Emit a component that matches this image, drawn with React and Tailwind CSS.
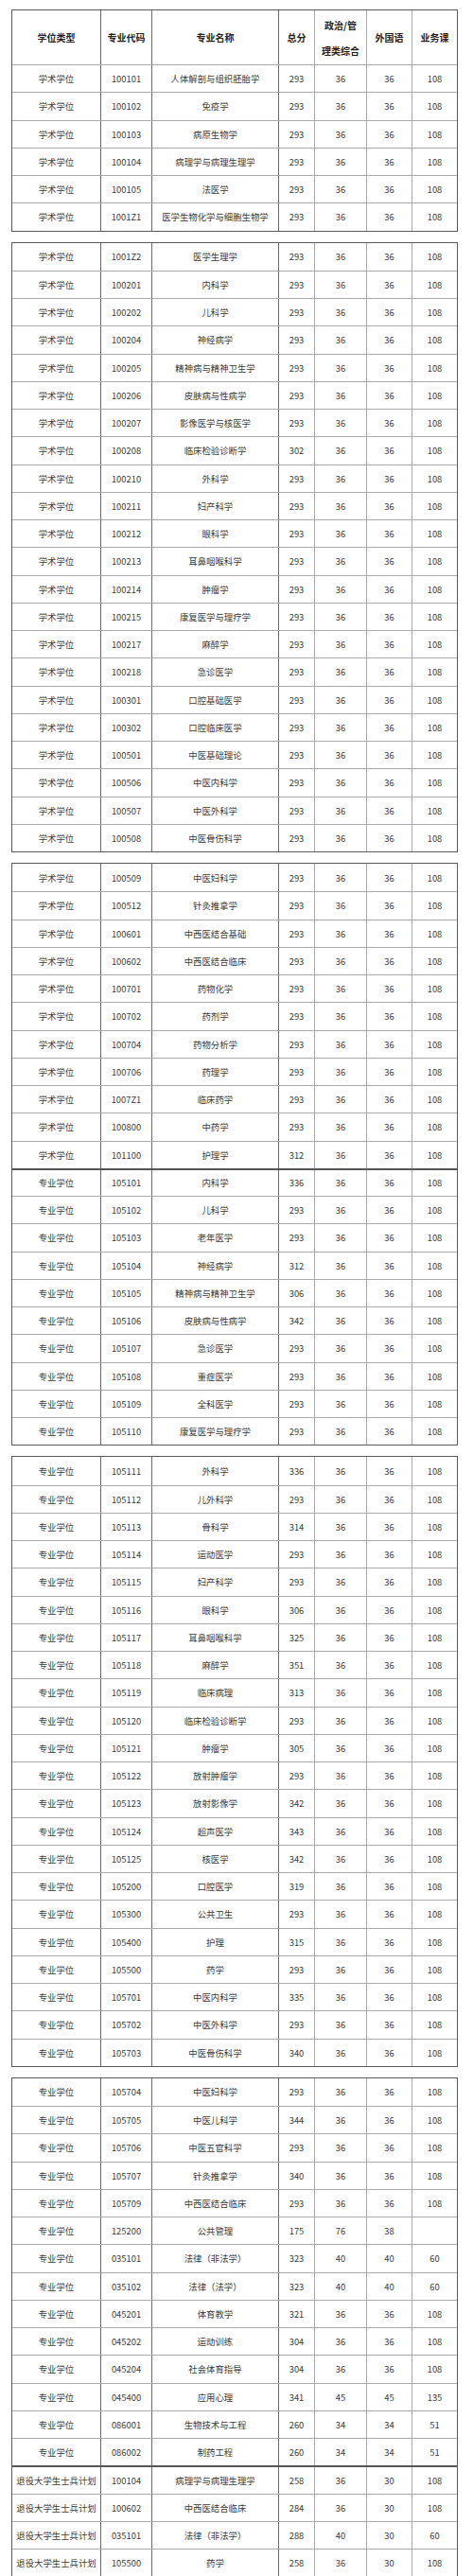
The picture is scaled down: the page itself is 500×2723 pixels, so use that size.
const font = { fontFamily: '"Noto Sans CJK SC", "Noto Sans", sans-serif' };

const XS = "学术学位";
const ZY = "专业学位";
const TY = "退役大学生士兵计划";

// "code|name|total|a|b|c" ; a/b/c default 36/36/108
const row = (type, s, sep) => {
  const [code, name, total, a = "36", b = "36", c = "108"] = s.split("|");
  return { type, code, name, total, a, b, c, sep };
};

const table1 = [
  "100101|人体解剖与组织胚胎学|293",
  "100102|免疫学|293",
  "100103|病原生物学|293",
  "100104|病理学与病理生理学|293",
  "100105|法医学|293",
  "1001Z1|医学生物化学与细胞生物学|293",
].map((s) => row(XS, s));

const table2 = [
  "1001Z2|医学生理学|293",
  "100201|内科学|293",
  "100202|儿科学|293",
  "100204|神经病学|293",
  "100205|精神病与精神卫生学|293",
  "100206|皮肤病与性病学|293",
  "100207|影像医学与核医学|293",
  "100208|临床检验诊断学|302",
  "100210|外科学|293",
  "100211|妇产科学|293",
  "100212|眼科学|293",
  "100213|耳鼻咽喉科学|293",
  "100214|肿瘤学|293",
  "100215|康复医学与理疗学|293",
  "100217|麻醉学|293",
  "100218|急诊医学|293",
  "100301|口腔基础医学|293",
  "100302|口腔临床医学|293",
  "100501|中医基础理论|293",
  "100506|中医内科学|293",
  "100507|中医外科学|293",
  "100508|中医骨伤科学|293",
].map((s) => row(XS, s));

const table3 = [
  ...[
    "100509|中医妇科学|293",
    "100512|针灸推拿学|293",
    "100601|中西医结合基础|293",
    "100602|中西医结合临床|293",
    "100701|药物化学|293",
    "100702|药剂学|293",
    "100704|药物分析学|293",
    "100706|药理学|293",
    "1007Z1|临床药学|293",
    "100800|中药学|293",
    "101100|护理学|312",
  ].map((s) => row(XS, s)),
  ...[
    "105101|内科学|336",
    "105102|儿科学|293",
    "105103|老年医学|293",
    "105104|神经病学|312",
    "105105|精神病与精神卫生学|306",
    "105106|皮肤病与性病学|342",
    "105107|急诊医学|293",
    "105108|重症医学|293",
    "105109|全科医学|293",
    "105110|康复医学与理疗学|293",
  ].map((s, i) => row(ZY, s, i === 0)),
];

const table4 = [
  "105111|外科学|336",
  "105112|儿外科学|293",
  "105113|骨科学|314",
  "105114|运动医学|293",
  "105115|妇产科学|293",
  "105116|眼科学|306",
  "105117|耳鼻咽喉科学|325",
  "105118|麻醉学|351",
  "105119|临床病理|313",
  "105120|临床检验诊断学|293",
  "105121|肿瘤学|305",
  "105122|放射肿瘤学|293",
  "105123|放射影像学|342",
  "105124|超声医学|343",
  "105125|核医学|342",
  "105200|口腔医学|319",
  "105300|公共卫生|293",
  "105400|护理|315",
  "105500|药学|293",
  "105701|中医内科学|335",
  "105702|中医外科学|293",
  "105703|中医骨伤科学|340",
].map((s) => row(ZY, s));

const table5 = [
  ...[
    "105704|中医妇科学|293",
    "105705|中医儿科学|344",
    "105706|中医五官科学|293",
    "105707|针灸推拿学|340",
    "105709|中西医结合临床|293",
    "125200|公共管理|175|76|38| ",
    "035101|法律（非法学）|323|40|40|60",
    "035102|法律（法学）|323|40|40|60",
    "045201|体育教学|321",
    "045202|运动训练|304",
    "045204|社会体育指导|304",
    "045400|应用心理|341|45|45|135",
    "086001|生物技术与工程|260|34|34|51",
    "086002|制药工程|260|34|34|51",
  ].map((s) => row(ZY, s)),
  ...[
    "100104|病理学与病理生理学|258|36|30|108",
    "100602|中西医结合临床|284|36|30|108",
    "035101|法律（非法学）|288|40|30|60",
    "105500|药学|258|36|30|108",
  ].map((s, i) => row(TY, s, i === 0)),
];

const grid = "grid grid-cols-[94px_54px_134px_38px_55px_48px_1fr]";
const dark = "border-r border-[#6a6a6a]";
const light = "border-r border-[#a8a8a8]";
const cellBorders = [dark, dark, dark, light, light, light, ""];

const Cell = ({ i, children, className = "" }) => (
  <div className={`flex items-center justify-center ${cellBorders[i]} ${className}`}>
    {children}
  </div>
);

const Header = () => (
  <div className={`${grid} h-[57px] text-[10px] font-bold text-[#222]`}>
    <Cell i={0}>学位类型</Cell>
    <Cell i={1}>专业代码</Cell>
    <Cell i={2}>专业名称</Cell>
    <Cell i={3}>总分</Cell>
    <Cell i={4} className="flex-col leading-[27px]">
      <span>政治/管</span>
      <span>理类综合</span>
    </Cell>
    <Cell i={5}>外国语</Cell>
    <Cell i={6}>业务课</Cell>
  </div>
);

const Row = ({ r, first }) => {
  const line = first
    ? ""
    : r.sep
    ? "border-t-2 border-t-[#555]"
    : "border-t border-t-[#ababab]";
  return (
    <div className={`${grid} h-[29.25px] text-[9.4px] text-[#3a3a3a] ${line}`}>
      <Cell i={0}>{r.type}</Cell>
      <Cell i={1}>{r.code}</Cell>
      <Cell i={2}>{r.name}</Cell>
      <Cell i={3}>{r.total}</Cell>
      <Cell i={4}>{r.a}</Cell>
      <Cell i={5}>{r.b}</Cell>
      <Cell i={6}>{r.c}</Cell>
    </div>
  );
};

const Table = ({ rows, header }) => (
  <div className="ml-[12px] w-[472px] border border-[#5a5a5a]">
    {header && <Header />}
    {rows.map((r, i) => (
      <Row key={r.code + i} r={r} first={!header && i === 0} />
    ))}
  </div>
);

export default function App() {
  return (
    <div
      className="flex min-h-[2723px] w-[500px] flex-col gap-[11px] bg-white pt-[10px]"
      style={font}
    >
      <Table rows={table1} header />
      <Table rows={table2} />
      <Table rows={table3} />
      <Table rows={table4} />
      <Table rows={table5} />
    </div>
  );
}
